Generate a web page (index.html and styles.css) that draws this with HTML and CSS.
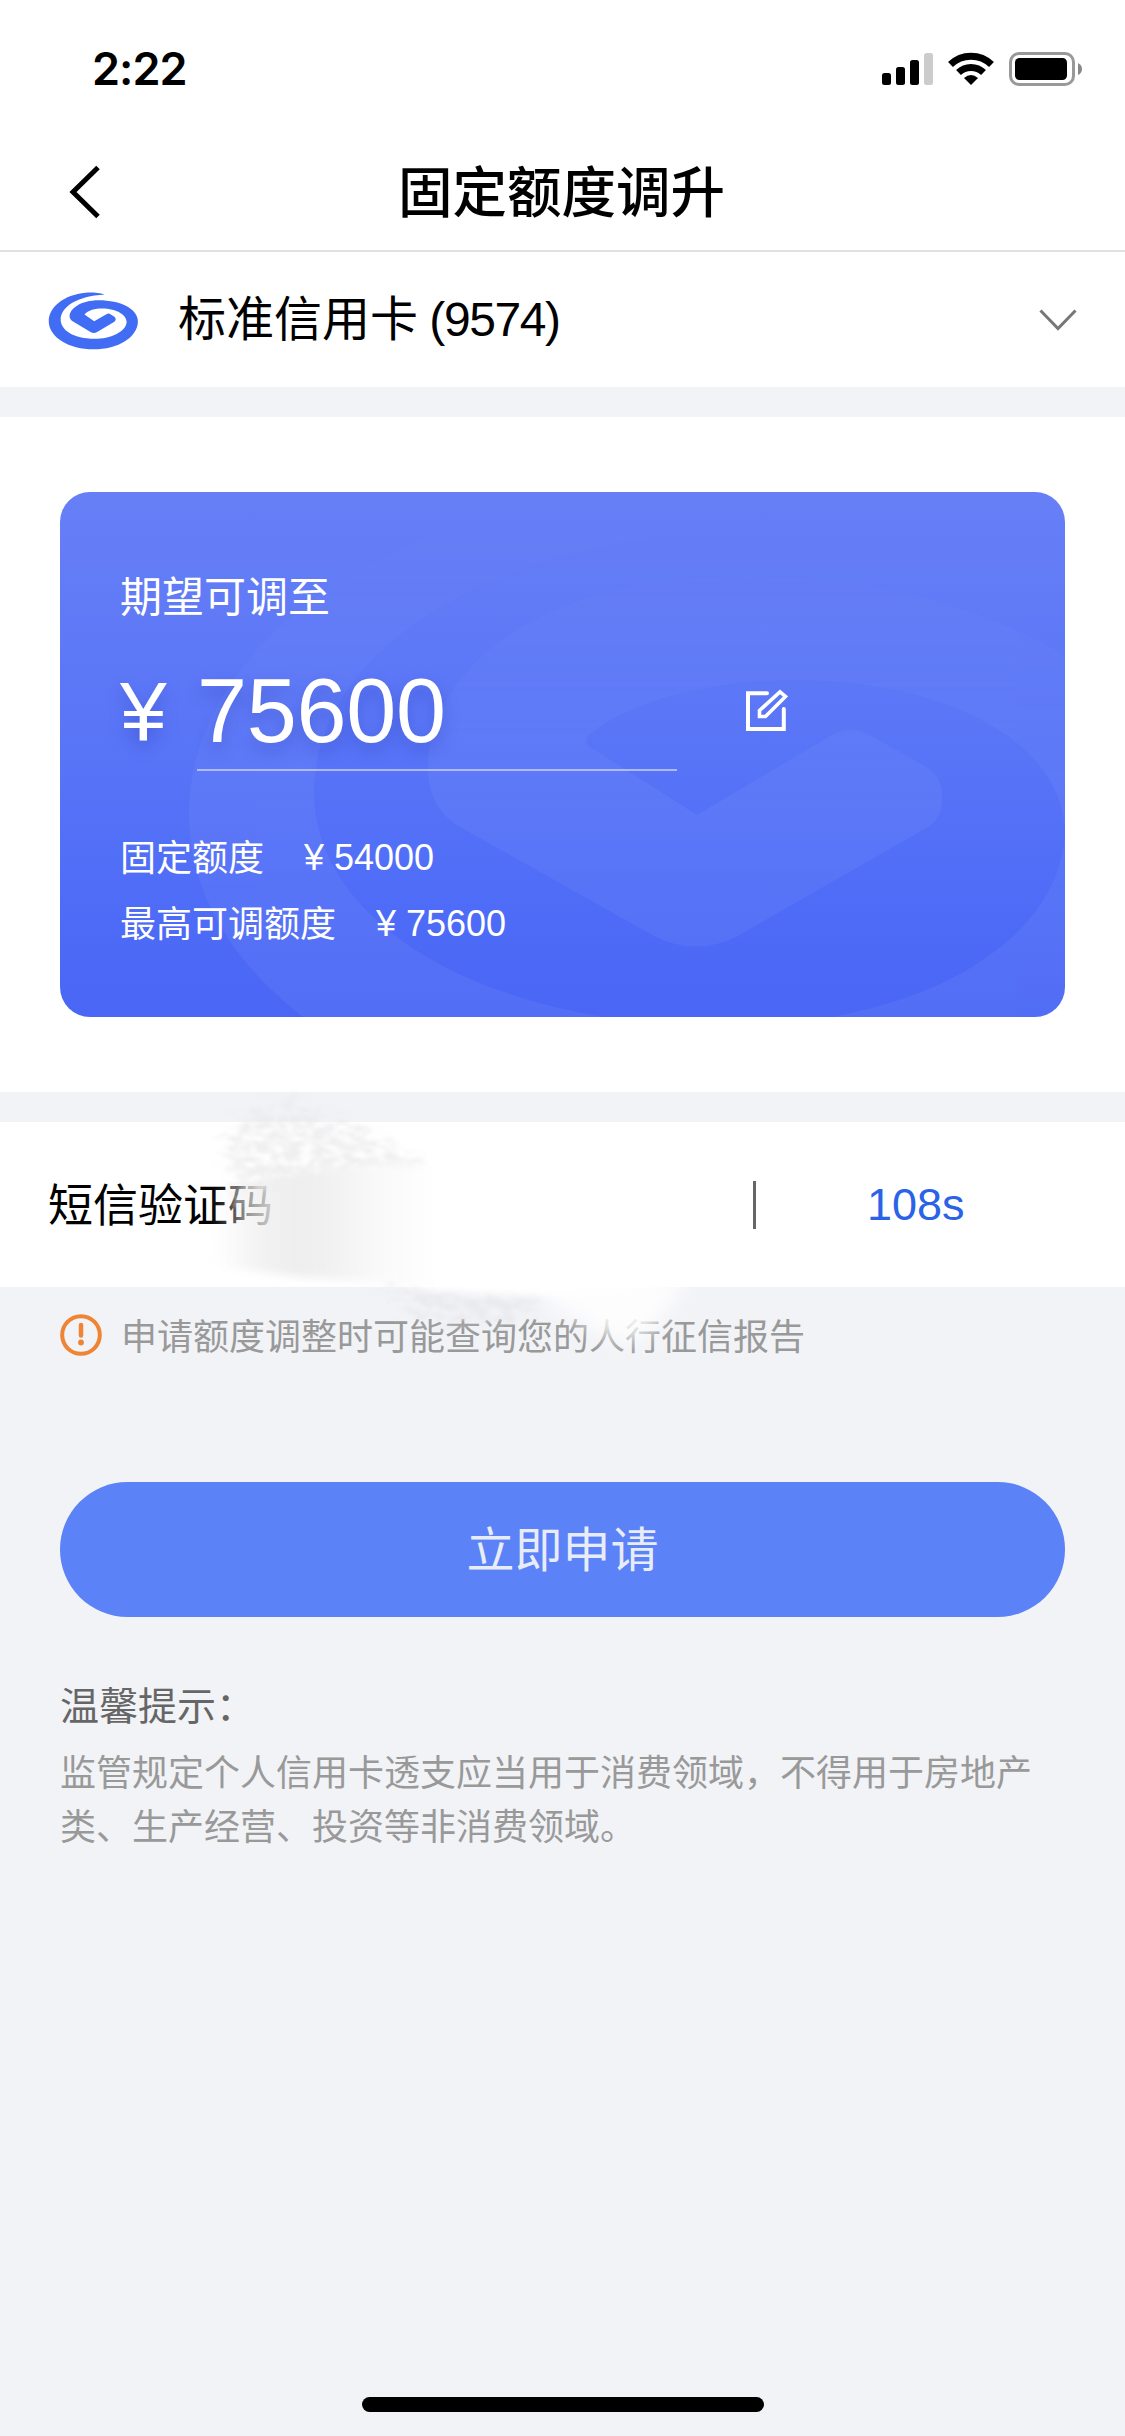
FILE: index.html
```html
<!DOCTYPE html>
<html lang="zh-CN">
<head>
<meta charset="utf-8">
<title>固定额度调升</title>
<link rel="stylesheet" href="styles.css">
</head>
<body>
<div class="screen">
  <header class="status">
    <span class="time">2:22</span>
    <svg class="status-icons" viewBox="0 0 201 34" width="201" height="34">
      <g>
        <rect x="0" y="21" width="9" height="12" rx="2.5"/>
        <rect x="14" y="15" width="9" height="18" rx="2.5"/>
        <rect x="28" y="8" width="9" height="25" rx="2.5"/>
        <rect x="42" y="1" width="9" height="32" rx="2.5" fill="#ccc"/>
      </g>
      <g fill="none" stroke="#000" stroke-width="7">
        <path d="M68.5 12.5A29.5 29.5 0 0 1 109.5 12.5"/>
        <path d="M76.5 20.500A18 18 0 0 1 101.500 20.500"/>
      </g>
      <path d="M89 33L82 26Q89 20 96 26Z"/>
      <rect x="128.500" y="1.500" width="63" height="31" rx="8.500" fill="none" stroke="#999" stroke-width="3"/>
      <rect x="133" y="6" width="52" height="22" rx="4.500"/>
      <path d="M196 11Q200 13 200 17T196 23Z" fill="#888"/>
    </svg>
  </header>
  <nav class="navbar">
    <svg class="back" viewBox="0 0 32 54" width="32" height="54"><path d="M29 2.500L4 27L29 51.500" fill="none" stroke="#000" stroke-width="5"/></svg>
    <h1>固定额度调升</h1>
  </nav>
  <section class="account">
    <svg class="logo" viewBox="53 67 272 175" width="91" height="58">
      <path fill="#416df5" d="M222 75C205 68 180 68 165 69C100 75 54 112 54 155C54 203 115 240 189 240C264 240 323 203 323 155C323 118 270 92 205 92C150 92 117 118 117 140C117 147 120 151 126 155L180 188Q190 194 200 188L252 157Q260 150 252 142L240 134Q235 130 228 134L191 155L162 135C172 122 195 117 215 117C260 117 289 137 289 158C286 188 240 208 192 208C130 208 90 183 90 150C90 112 140 78 222 75Z"/>
    </svg>
    <span class="account-name">标准信用卡 <span class="digits">(9574)</span></span>
    <svg class="chevron" viewBox="0 0 38 22" width="38" height="22"><path d="M1.500 1.500L19 19.500L36.500 1.500" fill="none" stroke="#777" stroke-width="3"/></svg>
  </section>
  <section class="limit">
    <div class="card">
      <svg class="watermark" viewBox="0 0 1005 525" width="1005" height="525">
        <defs><linearGradient id="wm" gradientUnits="userSpaceOnUse" x1="0" y1="0" x2="0" y2="525"><stop offset="0" stop-color="#fff" stop-opacity="0"/><stop offset=".3" stop-color="#fff" stop-opacity=".35"/><stop offset=".6" stop-color="#fff" stop-opacity=".85"/><stop offset="1" stop-color="#fff" stop-opacity=".9"/></linearGradient></defs>
        <path fill="url(#wm)" d="M745 29C683 3 592 3 537 7C300 29 129 166 129 322C129 500 354 640 625 640C899 640 1113 500 1113 322C1113 190 920 84 683 84C482 84 370 175 368 275C368 300 376 320 400 335L596 445Q636 464 676 445L868 335Q882 325 882 308V298Q880 285 868 276L808 242Q790 233 772 243L637 323L530 255Q520 248 534 239C570 212 640 188 740 188C890 190 1002 250 1005 340C1000 455 850 538 650 534C420 530 254 430 254 300C256 150 440 40 745 29Z"/>
      </svg>
      <div class="card-label">期望可调至</div>
      <div class="amount-row">
        <span class="currency">¥</span>
        <span class="amount">75600</span>
        <svg class="edit" viewBox="0 0 42 42" width="42" height="42" fill="none" stroke="#fff" stroke-width="4"><path d="M21 4.300H2V40H37.800V20" stroke-linecap="round"/><path d="M13.500 27.500V21.500L34 2.800L39.500 7.500L19.500 27.500Z" stroke-width="3.600"/></svg>
      </div>
      <div class="detail"><span class="detail-name">固定额度</span><span class="detail-value"><i>¥</i>54000</span></div>
      <div class="detail"><span class="detail-name">最高可调额度</span><span class="detail-value"><i>¥</i>75600</span></div>
    </div>
  </section>
  <section class="sms">
    <span class="sms-label">短信验证码</span>
    <span class="sms-bar"></span>
    <span class="countdown">108s</span>
    <svg class="smudge" viewBox="200 1080 540 300" width="540" height="300">
      <defs>
        <filter id="rough" x="-20%" y="-30%" width="140%" height="160%" color-interpolation-filters="sRGB">
          <feTurbulence type="fractalNoise" baseFrequency=".07 .12" numOctaves="4" seed="4" result="n"/>
          <feGaussianBlur in="SourceGraphic" stdDeviation="6" result="b"/>
          <feDisplacementMap in="b" in2="n" scale="40" xChannelSelector="R" yChannelSelector="G" result="d"/>
          <feColorMatrix in="n" values="0 0 0 0 0  0 0 0 0 0  0 0 0 0 0  0 0 2.500 0 -.600" result="m"/>
          <feComposite in="d" in2="m" operator="in"/>
          <feGaussianBlur stdDeviation="1.500"/>
        </filter>
        <filter id="soft" x="-20%" y="-50%" width="140%" height="200%" color-interpolation-filters="sRGB"><feGaussianBlur stdDeviation="10"/></filter>
        <filter id="edge" x="-20%" y="-20%" width="140%" height="140%" color-interpolation-filters="sRGB"><feGaussianBlur stdDeviation="4"/></filter>
        <linearGradient id="cover" gradientUnits="userSpaceOnUse" x1="210" y1="0" x2="450" y2="0"><stop offset="0" stop-color="#f2f2f2" stop-opacity="0"/><stop offset=".09" stop-color="#f1f1f1" stop-opacity=".3"/><stop offset=".15" stop-color="#f0f0f0" stop-opacity=".62"/><stop offset=".26" stop-color="#eee" stop-opacity=".85"/><stop offset=".36" stop-color="#eee"/><stop offset=".5" stop-color="#f1f1f1"/><stop offset=".7" stop-color="#f9f9f9"/><stop offset=".95" stop-color="#fff"/></linearGradient>
      </defs>
      <path filter="url(#rough)" fill="#e9e9eb" opacity=".7" d="M240 1115L285 1098L345 1122L385 1142L430 1172L410 1186L240 1195L225 1160Z"/>
      <path filter="url(#rough)" fill="#e5e5ea" opacity=".7" d="M375 1284L440 1290L550 1290L520 1320L440 1324Z"/>
      <path filter="url(#edge)" fill="url(#cover)" d="M212 1190L300 1172L370 1164L450 1168L620 1190L690 1260L680 1282L600 1294L520 1296L440 1291L380 1282L300 1277L215 1266Z"/>
      <path filter="url(#soft)" fill="#fff" opacity=".85" d="M540 1275L690 1275L670 1305L645 1340L610 1340L580 1320L550 1305Z"/>
    </svg>
  </section>
  <main class="rest">
    <div class="notice">
      <svg viewBox="0 0 42 42" width="42" height="42"><circle cx="21" cy="21" r="18.800" fill="none" stroke="#ee8434" stroke-width="4"/><path d="M21 11V21.500" stroke="#ee8434" stroke-width="4.500" stroke-linecap="round"/><circle cx="21" cy="28.500" r="2.900" fill="#ee8434"/></svg>
      <span>申请额度调整时可能查询您的人行征信报告</span>
    </div>
    <button class="apply">立即申请</button>
    <h2>温馨提示：</h2>
    <p>监管规定个人信用卡透支应当用于消费领域，不得用于房地产类、生产经营、投资等非消费领域。</p>
    <div class="home"></div>
  </main>
</div>
</body>
</html>
```
FILE: styles.css
```css
* { box-sizing: border-box; }
body { margin: 0; background: #f2f3f7; font-family: "Liberation Sans", "Noto Sans CJK SC", sans-serif; }
.screen { width: 1125px; height: 2436px; display: flex; flex-direction: column; color: #000; }
.status { height: 132px; padding: 52px 42px 0 92px; display: flex; justify-content: space-between; align-items: flex-start; background: #fff; }
.time { font: 600 45px/34px Inter, sans-serif; letter-spacing: -1px; }
.navbar { height: 120px; padding: 0 68px 0 69px; display: flex; align-items: center; background: #fff; border-bottom: 2px solid #e0e0e0; }
.back { margin-top: 1px; }
.navbar h1 { flex: 1; margin: 0 35px 4px 0; text-align: center; font: 500 54.5px/80px "Noto Sans CJK SC", sans-serif; }
.account { height: 135px; padding: 0 48px 0 48px; display: flex; align-items: center; background: #fff; }
.logo { margin-top: 3px; }
.account-name { flex: 1; margin-left: 39px; font-size: 48px; line-height: 70px; }
.digits { margin-left: -2px; letter-spacing: -1.4px; }
.limit { margin-top: 30px; height: 675px; padding: 75px 60px; background: #fff; }
.card { position: relative; height: 525px; padding: 75px 60px 0; border-radius: 30px; overflow: hidden; color: #fff; background: linear-gradient(#677ff6, #5a76f7 45%, #4f6df7 75%, #4966f5); }
.watermark { position: absolute; left: 0; top: 0; opacity: .055; }
.card-label { font-size: 42px; line-height: 62px; }
.amount-row { height: 142px; display: flex; align-items: flex-end; }
.currency { width: 77px; font: 500 84px/120px "Liberation Sans", sans-serif; }
.amount { width: 480px; height: 118px; border-bottom: 2px solid rgba(255,255,255,.5); font-size: 90px; line-height: 117px; letter-spacing: -.3px; }
.currency, .amount { text-shadow: 0 8px 16px rgba(40,60,180,.4); }
.edit { margin: 0 0 40px 69px; }
.detail { display: flex; align-items: center; height: 66px; font-size: 36px; gap: 40px; }
.amount-row + .detail { margin-top: 53px; }
.detail-name { margin-bottom: 5px; }
.detail-value { display: flex; margin-top: 1px; }
.detail-value i { width: 30px; font-style: normal; }
.sms { position: relative; margin-top: 30px; height: 165px; padding: 0 0 0 48px; display: flex; align-items: center; background: #fff; }
.sms-label { width: 705px; margin-bottom: 5px; font-size: 45px; }
.sms-bar { width: 3px; height: 48px; background: #666; }
.countdown { margin-left: 111px; font-size: 45px; color: #2a62e8; }
.smudge { position: absolute; left: 200px; top: -42px; z-index: 1; }
.rest { flex: 1; padding: 25px 60px 24px; display: flex; flex-direction: column; }
.notice { height: 46px; display: flex; align-items: center; gap: 19px; font-size: 36px; color: #999; }
.notice span { margin-bottom: 2px; }
.apply { margin: 124px 0 0; height: 135px; padding: 0 0 8px; border: 0; border-radius: 68px; background: #5b82f7; color: #e8ecf6; font: 48px "Noto Sans CJK SC", sans-serif; }
.rest h2 { margin: 57px 0 0; font: 400 39px/58px "Noto Sans CJK SC", sans-serif; color: #666; }
.rest p { margin: 15px 0 0; font-size: 36px; line-height: 54px; color: #999; }
.home { width: 402px; height: 15px; margin: auto auto 0; border-radius: 8px; background: #000; }
```
